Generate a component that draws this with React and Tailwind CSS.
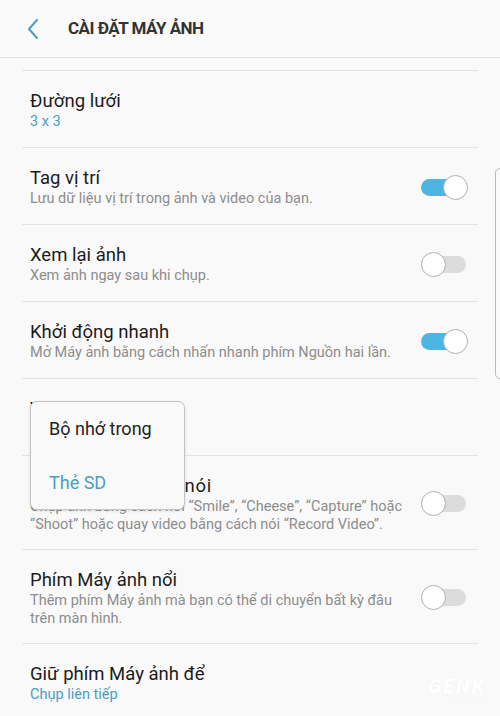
import React from "react";

function Toggle({ on }) {
  return (
    <div className="relative w-[47px] h-[27px] shrink-0">
      <div
        className={
          "absolute left-0 right-[2px] top-[5px] bottom-[5px] rounded-full " +
          (on ? "bg-[#4db5e2]" : "bg-[#dcdcdc]")
        }
      />
      <div
        className={
          "absolute top-[1px] w-[25px] h-[25px] rounded-full bg-white border border-[#b0b0b0] " +
          (on ? "right-0" : "left-0")
        }
      />
    </div>
  );
}

function Row({ title, titleClass, sub, subBlue, toggle, tall }) {
  return (
    <div
      className={
        "mx-[22px] border-b border-[#e3e3e3] flex items-start justify-between pl-[8px] pr-[10px] pt-[18px] " +
        (tall ? "h-[94px]" : "h-[77px]")
      }
    >
      <div className="flex flex-col min-w-0">
        <div className={"text-[18.5px] leading-[24px] text-[#1c1c1c] " + (titleClass || "")}>
          {title}
        </div>
        {sub && (
          <div
            className={
              "text-[14.5px] leading-[17.5px] " +
              (subBlue ? "text-[#4a9ec6]" : "text-[#8d8d8d]")
            }
          >
            {sub}
          </div>
        )}
      </div>
      {toggle !== undefined && (
        <div className={tall ? "mt-[16px]" : "mt-[8px]"}>
          <Toggle on={toggle} />
        </div>
      )}
    </div>
  );
}

export default function App() {
  return (
    <div
      className="relative w-[500px] h-[716px] overflow-hidden bg-[#f9f9f9]"
      style={{ fontFamily: "Roboto, 'Noto Sans', sans-serif" }}
    >
      {/* Header */}
      <div className="h-[58px] border-b border-[#e2e2e2] flex items-center">
        <svg
          width="14"
          height="22"
          viewBox="0 0 14 22"
          className="ml-[26px] mt-[1px]"
        >
          <path
            d="M11 2 L3 11 L11 20"
            fill="none"
            stroke="#4a9ec6"
            strokeWidth="2"
            strokeLinecap="round"
            strokeLinejoin="round"
          />
        </svg>
        <div className="ml-[28px] text-[17px] font-bold text-[#333333] tracking-[-0.5px]">
          CÀI ĐẶT MÁY ẢNH
        </div>
      </div>

      <div className="h-[13px] mx-[22px] border-b border-[#e3e3e3]" />

      <Row title="Đường lưới" sub="3 x 3" subBlue />
      <Row
        title="Tag vị trí"
        sub="Lưu dữ liệu vị trí trong ảnh và video của bạn."
        toggle={true}
      />
      <Row title="Xem lại ảnh" sub="Xem ảnh ngay sau khi chụp." toggle={false} />
      <Row
        title="Khởi động nhanh"
        sub="Mở Máy ảnh bằng cách nhấn nhanh phím Nguồn hai lần."
        toggle={true}
      />
      <Row title="Vị trí lưu trữ" sub="Thẻ SD" subBlue />
      <Row
        title="Điều khiển giọng nói"
        titleClass="tracking-[0.8px]"
        sub={
          <>
            Chụp ảnh bằng cách nói “Smile”, “Cheese”, “Capture” hoặc
            <br />
            “Shoot” hoặc quay video bằng cách nói “Record Video”.
          </>
        }
        toggle={false}
        tall
      />
      <Row
        title="Phím Máy ảnh nổi"
        sub={
          <>
            Thêm phím Máy ảnh mà bạn có thể di chuyển bất kỳ đâu
            <br />
            trên màn hình.
          </>
        }
        toggle={false}
        tall
      />
      <Row title="Giữ phím Máy ảnh để" sub="Chụp liên tiếp" subBlue />

      {/* Popup menu */}
      <div className="absolute left-[30px] top-[401px] w-[155px] h-[109px] rounded-[7px] border border-[#c4c4c4] bg-[#f9f9f9] shadow-[0_1px_3px_rgba(0,0,0,0.12)] flex flex-col">
        <div className="h-[55px] flex items-center pl-[18px] text-[18px] text-[#222222]">
          Bộ nhớ trong
        </div>
        <div className="h-[54px] flex items-center pl-[18px] text-[18px] text-[#4a9ec6]">
          Thẻ SD
        </div>
      </div>

      {/* Scrollbar */}
      <div className="absolute left-[495px] top-[168px] w-[12px] h-[211px] rounded-[5px] border border-[#b9b9b9] bg-[#fbfbfb]" />

      {/* Watermark */}
      <div className="absolute right-[14px] bottom-[12px] flex flex-col items-end text-white [text-shadow:0_0_1px_rgba(0,0,0,0.08)]">
        <div className="text-[20px] leading-[20px] font-black italic tracking-[2px]">
          GENK
        </div>
        <div className="text-[7px] leading-[8px] tracking-[1px]">GENK.VN</div>
      </div>
    </div>
  );
}
